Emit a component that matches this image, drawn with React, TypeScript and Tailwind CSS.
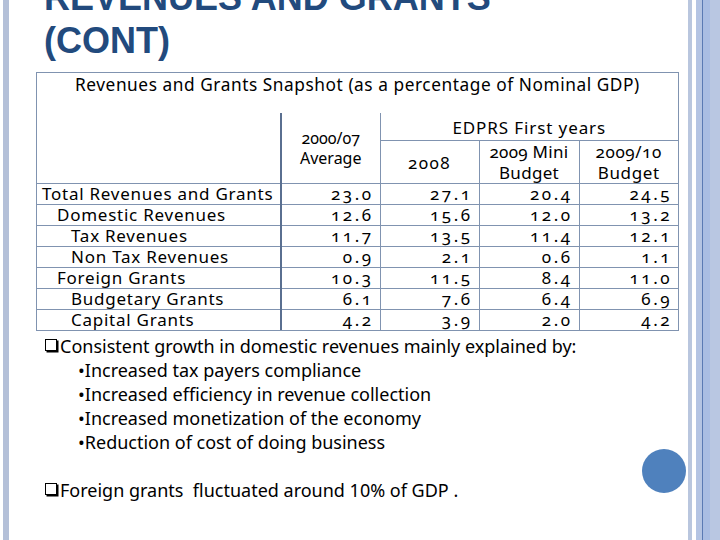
import React from 'react';

const rows = [
  { label: 'Total Revenues and Grants', indent: 'pl-[5px]', v: ['23.0', '27.1', '20.4', '24.5'] },
  { label: 'Domestic Revenues', indent: 'pl-[20px]', v: ['12.6', '15.6', '12.0', '13.2'] },
  { label: 'Tax Revenues', indent: 'pl-[34px]', v: ['11.7', '13.5', '11.4', '12.1'] },
  { label: 'Non Tax Revenues', indent: 'pl-[34px]', v: ['0.9', '2.1', '0.6', '1.1'] },
  { label: 'Foreign Grants', indent: 'pl-[20px]', v: ['10.3', '11.5', '8.4', '11.0'] },
  { label: 'Budgetary Grants', indent: 'pl-[34px]', v: ['6.1', '7.6', '6.4', '6.9'] },
  { label: 'Capital Grants', indent: 'pl-[34px]', v: ['4.2', '3.9', '2.0', '4.2'] },
];

const bullets = [
  'Increased tax payers compliance',
  'Increased efficiency in revenue collection',
  'Increased monetization of the economy',
  'Reduction of cost of doing business',
];

const Box: React.FC = () => (
  <span className="inline-block w-[12px] h-[12px] border-[1.5px] border-black shadow-[1.5px_1.5px_0_0_#000] mr-[3px] mt-[-3px]"></span>
);

const App: React.FC = () => {
  const cell = 'border border-[#8093b0] h-[21px] p-0 leading-[18px]';
  return (
    <div className="relative w-[720px] h-[540px] bg-white overflow-hidden flex">
      <div className="w-[3px]"></div>
      <div className="w-[6px] bg-[#b4c0d8]"></div>

      <div className="flex-1 flex flex-col">
        <h1 className="mt-[-24px] pl-[35px] font-['Liberation_Sans',Arial,sans-serif] font-bold text-[36px] leading-[43px] text-[#224a7d]">
          REVENUES AND GRANTS
          <br />
          (CONT)
        </h1>

        <div className="mt-[10px] ml-[27px] w-[643px] border border-[#8093b0] font-['Noto_Sans',sans-serif] text-black">
          <div className="h-[40px] pl-[38px] text-[17.3px] tracking-[0.55px] leading-[24px]">
            Revenues and Grants Snapshot (as a percentage of Nominal GDP)
          </div>
          <table className="w-full border-collapse table-fixed text-[17px] oldstyle-nums">
            <colgroup>
              <col className="w-[244px]" />
              <col className="w-[99px]" />
              <col className="w-[99px]" />
              <col className="w-[100px]" />
              <col />
            </colgroup>
            <thead>
              <tr className="h-[27px]">
                <th rowSpan={2} className="border-r-2 border-r-[#5a6f90] border-b border-b-[#8093b0] font-normal"></th>
                <th rowSpan={2} className="border-b border-[#8093b0] border-r font-normal text-center leading-[20px] text-[16px]">
                  2000/07
                  <br />
                  Average
                </th>
                <th colSpan={3} className="border-b border-[#8093b0] font-normal text-center leading-none pt-[2px] tracking-[0.9px]">
                  EDPRS First years
                </th>
              </tr>
              <tr className="h-[42px]">
                <th className="border-b border-r border-[#8093b0] font-normal text-center pt-[2px] tracking-[1.5px]">2008</th>
                <th className="border-b border-r border-[#8093b0] font-normal text-center leading-[21px] tracking-[0.3px]">
                  2009 Mini
                  <br />
                  Budget
                </th>
                <th className="border-b border-[#8093b0] font-normal text-center leading-[21px] tracking-[0.6px]">
                  2009/10
                  <br />
                  Budget
                </th>
              </tr>
            </thead>
            <tbody>
              {rows.map((r, i) => (
                <tr key={r.label}>
                  <td className={`${cell} border-l-0 border-r-2 border-r-[#5a6f90] whitespace-nowrap tracking-[0.75px] ${r.indent} ${i === rows.length - 1 ? 'border-b-0' : ''}`}>
                    {r.label}
                  </td>
                  {r.v.map((v, j) => (
                    <td
                      key={j}
                      className={`${cell} text-right pr-[6px] tracking-[2.5px] ${j === 3 ? 'border-r-0' : ''} ${i === rows.length - 1 ? 'border-b-0' : ''}`}
                    >
                      {v}
                    </td>
                  ))}
                </tr>
              ))}
            </tbody>
          </table>
        </div>

        <div className="mt-[3px] pl-[36px] font-['Noto_Sans',sans-serif] text-[18px] text-black leading-[24px]">
          <div className="flex items-center">
            <Box />
            <span>Consistent growth in domestic revenues mainly explained by:</span>
          </div>
          <ul className="pl-[33px]">
            {bullets.map((b) => (
              <li key={b}>•{b}</li>
            ))}
          </ul>
          <div className="flex items-center mt-[24px]">
            <Box />
            <span>Foreign grants&nbsp; fluctuated around 10% of GDP .</span>
          </div>
        </div>
      </div>

      <div className="flex w-[32px]">
        <div className="w-[4px] bg-[#b9c6de]"></div>
        <div className="w-[4px] bg-white"></div>
        <div className="w-[6px] bg-[#b4c4e3]"></div>
        <div className="w-[1px] bg-[#5a7ab4]"></div>
        <div className="w-[7px] bg-[#a9bde3]"></div>
        <div className="flex-1 bg-[#b9c7e2]"></div>
      </div>

      <div className="absolute left-[642px] top-[449px] w-[44px] h-[44px] rounded-full bg-[#4f81bd]"></div>
    </div>
  );
};

export default App;
